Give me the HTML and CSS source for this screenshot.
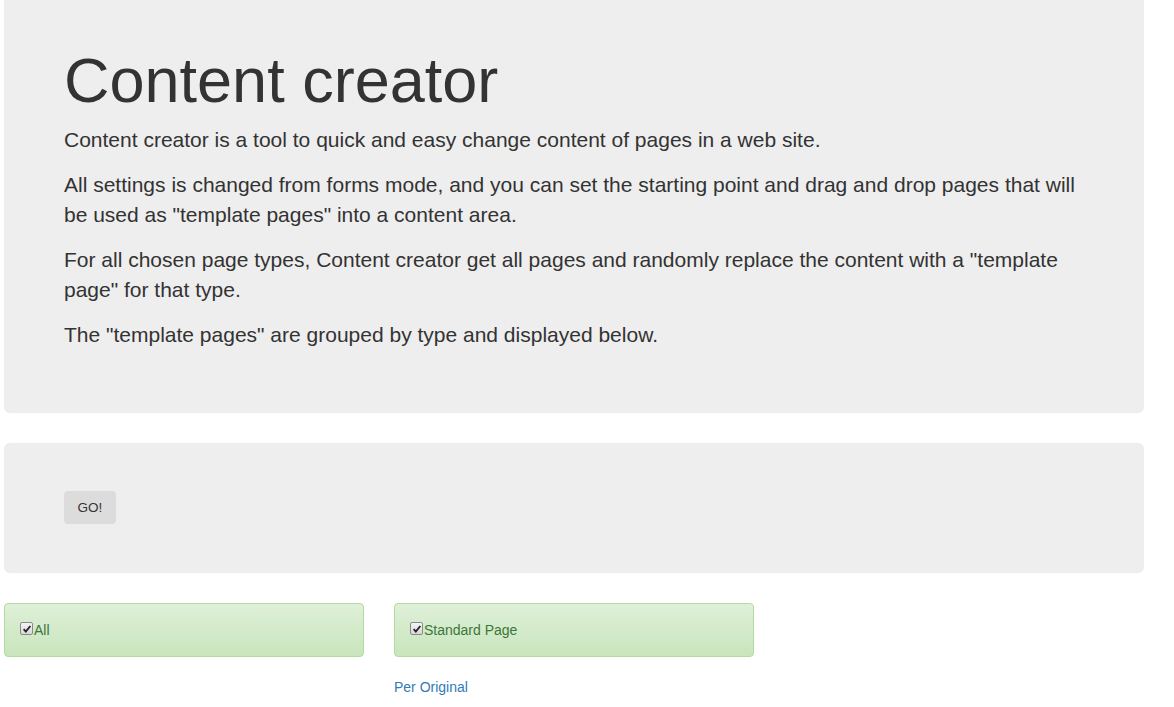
FILE: index.html
```html
<!DOCTYPE html>
<html>
<head>
<meta charset="utf-8">
<title>Content creator</title>
<link rel="stylesheet" href="styles.css">
</head>
<body>
<div class="page">
  <div class="jumbotron intro">
    <h1>Content creator</h1>
    <p>Content creator is a tool to quick and easy change content of pages in a web site.</p>
    <p>All settings is changed from forms mode, and you can set the starting point and drag and drop pages that will be used as "template pages" into a content area.</p>
    <p>For all chosen page types, Content creator get all pages and randomly replace the content with a "template page" for that type.</p>
    <p>The "template pages" are grouped by type and displayed below.</p>
  </div>
  <div class="jumbotron actions">
    <button class="btn">GO!</button>
  </div>
  <div class="row">
    <div class="col">
      <div class="alert"><span class="check"><svg viewBox="0 0 12 12"><path d="M2 6.2 L4.6 9 L10 2.4" fill="none" stroke="#222" stroke-width="2.2"/></svg></span>All</div>
    </div>
    <div class="col">
      <div class="alert"><span class="check"><svg viewBox="0 0 12 12"><path d="M2 6.2 L4.6 9 L10 2.4" fill="none" stroke="#222" stroke-width="2.2"/></svg></span>Standard Page</div>
      <a class="link" href="#">Per Original</a>
    </div>
  </div>
</div>
</body>
</html>
```
FILE: styles.css
```css
html, body {
  margin: 0;
  padding: 0;
  background: #fff;
}
body {
  font-family: "Liberation Sans", Arial, Helvetica, sans-serif;
  font-size: 14px;
  line-height: 20px;
  color: #333;
}
.page {
  width: 1140px;
  padding: 0 4px;
}
.jumbotron {
  background: #eee;
  border-radius: 0 0 6px 6px;
  margin-bottom: 30px;
}
.intro {
  padding: 46px 60px 49px;
}
.intro h1 {
  font-size: 63px;
  font-weight: 500;
  line-height: 69px;
  margin: 0 0 10px;
  color: #333;
}
.intro p {
  font-size: 21px;
  line-height: 29.4px;
  margin: 0 0 16px;
  color: #333;
}
.intro p:last-child {
  margin-bottom: 15px;
}
.actions {
  border-radius: 6px;
  padding: 48px 60px 49px;
}
.btn {
  display: block;
  height: 33px;
  width: 52px;
  padding: 0;
  border: 0;
  border-radius: 4px;
  background: #dcdcdc;
  color: #333;
  font-family: "Liberation Sans", Arial, sans-serif;
  font-size: 13.5px;
}
.row {
  display: flex;
  gap: 30px;
}
.col {
  width: 360px;
}
.alert {
  display: flex;
  align-items: center;
  height: 54px;
  box-sizing: border-box;
  padding: 0 15px;
  border: 1px solid #b2dba1;
  border-radius: 4px;
  background: linear-gradient(to bottom, #dff0d8 0%, #c8e5bc 100%);
  color: #3c763d;
  margin: 0 0 20px;
}
.check {
  display: inline-flex;
  width: 11px;
  height: 11px;
  border: 1px solid #8a8a8a;
  border-radius: 2px;
  background: linear-gradient(to bottom, #f4f4f4, #d8d8d8);
  margin: -3px 1px 0 0;
  align-items: center;
  justify-content: center;
}
.check svg {
  width: 10px;
  height: 10px;
}
.link {
  color: #337ab7;
  text-decoration: none;
  font-size: 14px;
}
```
